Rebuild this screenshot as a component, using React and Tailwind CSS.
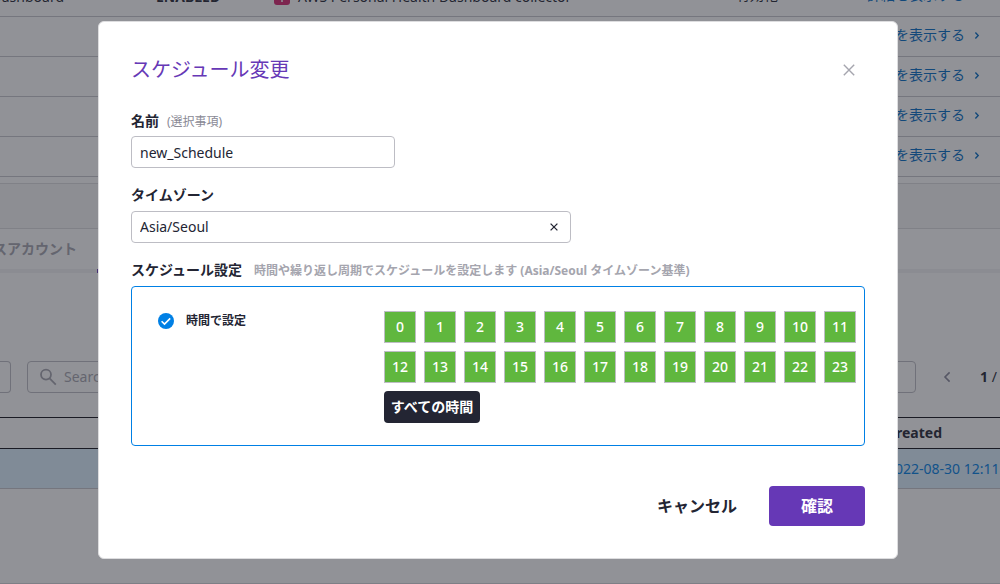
import { useState } from "react";

const HOURS = Array.from({ length: 24 }, (_, hour) => hour);

const COLLECTORS = [
  {
    name: "AWS Personal Health Dashboard",
    state: "ENABLED",
    plugin: "AWS Personal Health Dashboard collector",
    kind: "有効化",
  },
  {},
  {},
  {},
  {},
];

function ChevronRight() {
  return (
    <svg className="size-3" viewBox="0 0 12 12" fill="none" stroke="currentColor" strokeWidth="1.4" aria-hidden="true">
      <path d="M4.4 3.4 7.2 6.4 4.4 9.4" />
    </svg>
  );
}

function ChevronLeft() {
  return (
    <svg className="h-4 w-3" viewBox="0 0 12 16" fill="none" stroke="currentColor" strokeWidth="1.6" aria-hidden="true">
      <path d="M8.6 3.4 4 8l4.6 4.6" />
    </svg>
  );
}

function SearchIcon() {
  return (
    <svg className="size-5 shrink-0" viewBox="0 0 20 20" fill="none" stroke="currentColor" strokeWidth="1.8" aria-hidden="true">
      <circle cx="8" cy="7.6" r="5" />
      <path d="m11.6 11.4 6.2 6.2" />
    </svg>
  );
}

function CloseIcon() {
  return (
    <svg className="size-4" viewBox="0 0 16 16" fill="none" stroke="currentColor" strokeWidth="1.4" aria-hidden="true">
      <path d="m2.8 2.8 10.4 10.4M13.2 2.8 2.8 13.2" />
    </svg>
  );
}

function ClearIcon() {
  return (
    <svg className="size-3" viewBox="0 0 12 12" fill="none" stroke="currentColor" strokeWidth="1.3" aria-hidden="true">
      <path d="m2.6 2.6 6.8 6.8M9.4 2.6 2.6 9.4" />
    </svg>
  );
}

function CollectorTable() {
  return (
    <table className="-mt-[23px] w-full table-fixed border-separate border-spacing-0 text-sm">
      <colgroup>
        <col className="w-[156px]" />
        <col className="w-[118px]" />
        <col className="w-[462px]" />
        <col className="w-[131px]" />
        <col />
      </colgroup>
      <tbody>
        {COLLECTORS.map((row, index) => (
          <tr key={index} className="h-10">
            <td className="border-b border-[#c6c6cd] p-0">
              <span className="flex w-16 justify-end whitespace-nowrap">{row.name}</span>
            </td>
            <td className="border-b border-[#c6c6cd] p-0 font-bold">{row.state}</td>
            <td className="border-b border-[#c6c6cd] p-0">
              {row.plugin && (
                <span className="flex items-center gap-2">
                  <svg className="size-4" viewBox="0 0 16 16" aria-hidden="true">
                    <rect width="16" height="16" rx="3" fill="#d6246e" />
                    <path d="M8 3v10M4 8h8" stroke="#ffffff" strokeWidth="1.5" />
                  </svg>
                  {row.plugin}
                </span>
              )}
            </td>
            <td className="border-b border-[#c6c6cd] p-0 pb-1">{row.kind}</td>
            <td className="border-b border-[#c6c6cd] p-0 pb-1 text-[#006bc4]">
              <a href="#detail" className="flex items-center gap-1.5 whitespace-nowrap">
                詳細を表示する
                <ChevronRight />
              </a>
            </td>
          </tr>
        ))}
      </tbody>
    </table>
  );
}

function BackgroundPage() {
  return (
    <div className="flex h-screen flex-col overflow-hidden border-b border-[#d8d8dd] bg-white" inert>
      <CollectorTable />
      <div className="mt-1.5 h-[46px] shrink-0 border-y border-[#dddddf] bg-[#f7f7f7]" />
      <div className="flex h-11 shrink-0 border-b-4 border-[#f2f2f4]">
        <div className="flex w-[97px] items-center justify-end pr-5 text-sm font-bold whitespace-nowrap text-[#a5a5ae]">
          サービスアカウント
        </div>
        <div className="-mb-1 w-32 border-b-4 border-[#6638b6]" />
      </div>
      <div className="mt-[88px] flex shrink-0 items-center">
        <div className="h-8 w-[11px] shrink-0 rounded-r border border-l-0 border-[#bdbdc4]" />
        <label className="ml-4 flex h-8 w-[889px] shrink-0 items-center gap-1.5 rounded border border-[#bdbdc4] pl-2.5 text-sm text-[#a5a5ae]">
          <SearchIcon />
          <input type="search" placeholder="Search" aria-label="Search" className="w-40 placeholder:text-[#a5a5ae]" />
        </label>
        <button type="button" aria-label="Previous page" className="ml-[25px] shrink-0 text-[#88889a]">
          <ChevronLeft />
        </button>
        <span className="ml-[27px] shrink-0 text-sm whitespace-nowrap">
          <b>1</b> / 1
        </span>
      </div>
      <table className="mt-6 w-full shrink-0 table-fixed border-separate border-spacing-0 text-left text-sm">
        <colgroup>
          <col className="w-[887px]" />
          <col />
        </colgroup>
        <thead>
          <tr className="h-8">
            <th className="border-y border-[#101018] p-0" />
            <th className="border-y border-[#101018] p-0">Created</th>
          </tr>
        </thead>
        <tbody>
          <tr className="h-10 bg-[#dcf0ff]">
            <td className="border-b border-[#c6c6cd] p-0" />
            <td className="border-b border-[#c6c6cd] p-0 whitespace-nowrap text-[#0080e5]">2022-08-30 12:11:20</td>
          </tr>
        </tbody>
      </table>
    </div>
  );
}

function HourGrid({ selected, onToggle, onSelectAll }) {
  return (
    <div className="flex flex-col items-start gap-2">
      <div className="grid grid-cols-12 gap-2">
        {HOURS.map((hour) => (
          <button
            key={hour}
            type="button"
            aria-pressed={selected.includes(hour)}
            onClick={() => onToggle(hour)}
            className="size-8 border border-[#bdbdc4] bg-white text-sm font-medium aria-pressed:bg-[#60b73e] aria-pressed:text-white"
          >
            {hour}
          </button>
        ))}
      </div>
      <button type="button" onClick={onSelectAll} className="h-8 w-24 rounded bg-[#232533] text-sm font-bold text-white">
        すべての時間
      </button>
    </div>
  );
}

function ScheduleDialog() {
  const [name, setName] = useState("new_Schedule");
  const [timezone, setTimezone] = useState("Asia/Seoul");
  const [hours, setHours] = useState(HOURS);

  const toggleHour = (hour) =>
    setHours((current) => (current.includes(hour) ? current.filter((h) => h !== hour) : [...current, hour]));

  return (
    <section
      role="dialog"
      aria-modal="true"
      aria-labelledby="dialog-title"
      className="w-full max-w-[800px] rounded-md border border-[#dddddf] bg-white px-8 pt-8 pb-8"
    >
      <header className="flex h-8 items-center justify-between">
        <h1 id="dialog-title" className="text-xl text-[#6638b6]">
          スケジュール変更
        </h1>
        <button type="button" aria-label="Close" className="mr-2 text-[#a5a5ae]">
          <CloseIcon />
        </button>
      </header>

      <form className="mt-[25px] flex flex-col" onSubmit={(event) => event.preventDefault()}>
        <label htmlFor="schedule-name" className="flex h-5 items-baseline gap-2 text-sm font-bold">
          名前
          <span className="text-xs font-normal text-[#898995]">(選択事項)</span>
        </label>
        <input
          id="schedule-name"
          value={name}
          onChange={(event) => setName(event.target.value)}
          className="mt-[5px] h-8 w-66 rounded border border-[#bdbdc4] px-2 text-sm"
        />

        <label htmlFor="schedule-timezone" className="mt-[17px] text-sm font-bold">
          タイムゾーン
        </label>
        <div className="mt-1.5 flex h-8 w-110 items-center rounded border border-[#bdbdc4] pr-2.5 pl-2">
          <input
            id="schedule-timezone"
            value={timezone}
            onChange={(event) => setTimezone(event.target.value)}
            className="min-w-0 grow text-sm outline-none"
          />
          <button type="button" aria-label="Clear timezone" onClick={() => setTimezone("")}>
            <ClearIcon />
          </button>
        </div>

        <div className="mt-[17px] flex h-5 items-baseline gap-3">
          <h2 className="text-sm font-bold">スケジュール設定</h2>
          <p className="text-xs font-bold text-[#a5a5ae]">
            時間や繰り返し周期でスケジュールを設定します (Asia/Seoul タイムゾーン基準)
          </p>
        </div>
        <div className="mt-1.5 flex h-40 items-start justify-between rounded border border-[#0080e5] pt-6 pr-2 pl-6">
          <label className="flex h-5 items-center gap-2.5 text-xs font-bold">
            <span className="grid size-5 place-items-center">
              <input
                type="radio"
                name="schedule-mode"
                defaultChecked
                className="col-start-1 row-start-1 size-4 appearance-none rounded-full bg-[#0080e5]"
              />
              <svg
                className="pointer-events-none col-start-1 row-start-1 size-4"
                viewBox="0 0 16 16"
                fill="none"
                stroke="#ffffff"
                strokeWidth="1.6"
                aria-hidden="true"
              >
                <path d="m3.6 8.2 2.9 2.9 5.7-5.7" />
              </svg>
            </span>
            時間で設定
          </label>
          <HourGrid selected={hours} onToggle={toggleHour} onSelectAll={() => setHours(HOURS)} />
        </div>

        <footer className="mt-10 flex justify-end gap-4 font-bold">
          <button type="button" className="h-10 px-4">
            キャンセル
          </button>
          <button type="submit" className="h-10 w-24 rounded bg-[#6638b6] text-white">
            確認
          </button>
        </footer>
      </form>
    </section>
  );
}

export default function App() {
  return (
    <div className="font-['Noto_Sans','Noto_Sans_CJK_JP',sans-serif] text-[#232533]" lang="ja">
      <BackgroundPage />
      <div className="fixed inset-0 flex items-start justify-center overflow-hidden bg-[#23262f]/50 pt-[21px] pr-1">
        <ScheduleDialog />
      </div>
    </div>
  );
}
